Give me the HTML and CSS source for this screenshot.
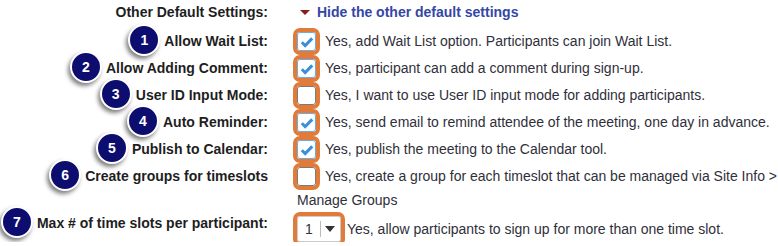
FILE: index.html
```html
<!DOCTYPE html>
<html>
<head>
<meta charset="utf-8">
<link rel="stylesheet" href="styles.css">
</head>
<body>
<div class="form">
  <div class="row head">
    <div class="label">Other Default Settings:</div>
    <div class="value"><span class="tri"></span><a class="link">Hide the other default settings</a></div>
  </div>

  <div class="row">
    <div class="label"><span class="badge">1</span>Allow Wait List:</div>
    <div class="value"><span class="cb on"><svg viewBox="0 0 16 16"><path d="M2.8 8.2l3.4 3.4L13.2 4.4"/></svg></span><span class="txt">Yes, add Wait List option. Participants can join Wait List.</span></div>
  </div>
  <div class="row">
    <div class="label"><span class="badge">2</span>Allow Adding Comment:</div>
    <div class="value"><span class="cb on"><svg viewBox="0 0 16 16"><path d="M2.8 8.2l3.4 3.4L13.2 4.4"/></svg></span><span class="txt">Yes, participant can add a comment during sign-up.</span></div>
  </div>
  <div class="row">
    <div class="label"><span class="badge">3</span>User ID Input Mode:</div>
    <div class="value"><span class="cb"></span><span class="txt">Yes, I want to use User ID input mode for adding participants.</span></div>
  </div>
  <div class="row">
    <div class="label"><span class="badge">4</span>Auto Reminder:</div>
    <div class="value"><span class="cb on"><svg viewBox="0 0 16 16"><path d="M2.8 8.2l3.4 3.4L13.2 4.4"/></svg></span><span class="txt">Yes, send email to remind attendee of the meeting, one day in advance.</span></div>
  </div>
  <div class="row">
    <div class="label"><span class="badge">5</span>Publish to Calendar:</div>
    <div class="value"><span class="cb on"><svg viewBox="0 0 16 16"><path d="M2.8 8.2l3.4 3.4L13.2 4.4"/></svg></span><span class="txt">Yes, publish the meeting to the Calendar tool.</span></div>
  </div>
  <div class="row">
    <div class="label"><span class="badge">6</span>Create groups for timeslots</div>
    <div class="value wrap"><div class="line"><span class="cb"></span><span class="txt">Yes, create a group for each timeslot that can be managed via Site Info &gt;</span></div><div class="line2">Manage Groups</div></div>
  </div>
  <div class="row last">
    <div class="label"><span class="badge">7</span>Max # of time slots per participant:</div>
    <div class="value sel-row"><span class="sel"><span class="num">1</span><span class="arrow"></span></span><span class="txt2">Yes, allow participants to sign up for more than one time slot.</span></div>
  </div>
</div>
</body>
</html>
```

FILE: styles.css
```css
html, body {
  margin: 0;
  padding: 0;
  background: #fff;
}
body {
  font-family: "Liberation Sans", Arial, sans-serif;
  font-size: 14px;
  color: #333;
}
.form {
  display: flex;
  flex-direction: column;
  width: 778px;
}
.row {
  display: grid;
  grid-template-columns: 268px 1fr;
  column-gap: 29px;
  line-height: 27px;
}
.row.head {
  line-height: 24px;
  padding-bottom: 4px;
}
.label {
  display: flex;
  justify-content: flex-end;
  align-items: center;
  align-self: start;
  height: 27px;
  font-weight: bold;
  color: #1e1e1e;
  white-space: nowrap;
}
.row.head .label { height: 24px; }
.value {
  display: flex;
  align-items: center;
  white-space: nowrap;
  color: #2f2f3a;
}
.tri {
  width: 0;
  height: 0;
  border-left: 5px solid transparent;
  border-right: 5px solid transparent;
  border-top: 5px solid #8a1c1c;
  margin: 1px 7px 0 3px;
}
.link {
  color: #3446a6;
  font-weight: bold;
}
.badge {
  width: 28px;
  height: 28px;
  border-radius: 50%;
  background: #0d0d70;
  border: 2px solid #fff;
  color: #fff;
  font-weight: bold;
  font-size: 14px;
  line-height: 28px;
  text-align: center;
  box-shadow: -2px 3px 4px rgba(0,0,0,0.5);
  margin: -8px 4px -4px 0;
  flex: none;
}
.cb {
  width: 17px;
  height: 17px;
  border: 1px solid #7a7a7a;
  border-radius: 3px;
  background: #fff;
  outline: 4px solid #e07b39;
  outline-offset: 0;
  flex: none;
  display: flex;
  align-items: center;
  justify-content: center;
  margin-right: 9px;
}
.cb.on {
  border-color: #66aee4;
}
.cb svg {
  width: 16px;
  height: 16px;
  fill: none;
  stroke: #3a8fd8;
  stroke-width: 3;
}
.wrap {
  display: flex;
  flex-direction: column;
  align-items: flex-start;
}
.line {
  display: flex;
  align-items: center;
  height: 27px;
}
.line2 {
  line-height: 20px;
}
.sel-row {
  padding-top: 6px;
  align-self: start;
}
.sel {
  display: flex;
  align-items: center;
  width: 42px;
  height: 24px;
  border: 1px solid #ccc;
  border-radius: 3px;
  background: #fff;
  outline: 4px solid #e07b39;
  outline-offset: 0;
  margin-right: 6px;
  flex: none;
}
.num {
  width: 22px;
  color: #333;
  border-right: 1px solid #bbb;
  height: 16px;
  display: flex;
  align-items: center;
  justify-content: center;
}
.arrow {
  width: 0;
  height: 0;
  border-left: 5px solid transparent;
  border-right: 5px solid transparent;
  border-top: 6px solid #333;
  margin-left: 4px;
}
.txt2 {
  line-height: 25px;
}
```
